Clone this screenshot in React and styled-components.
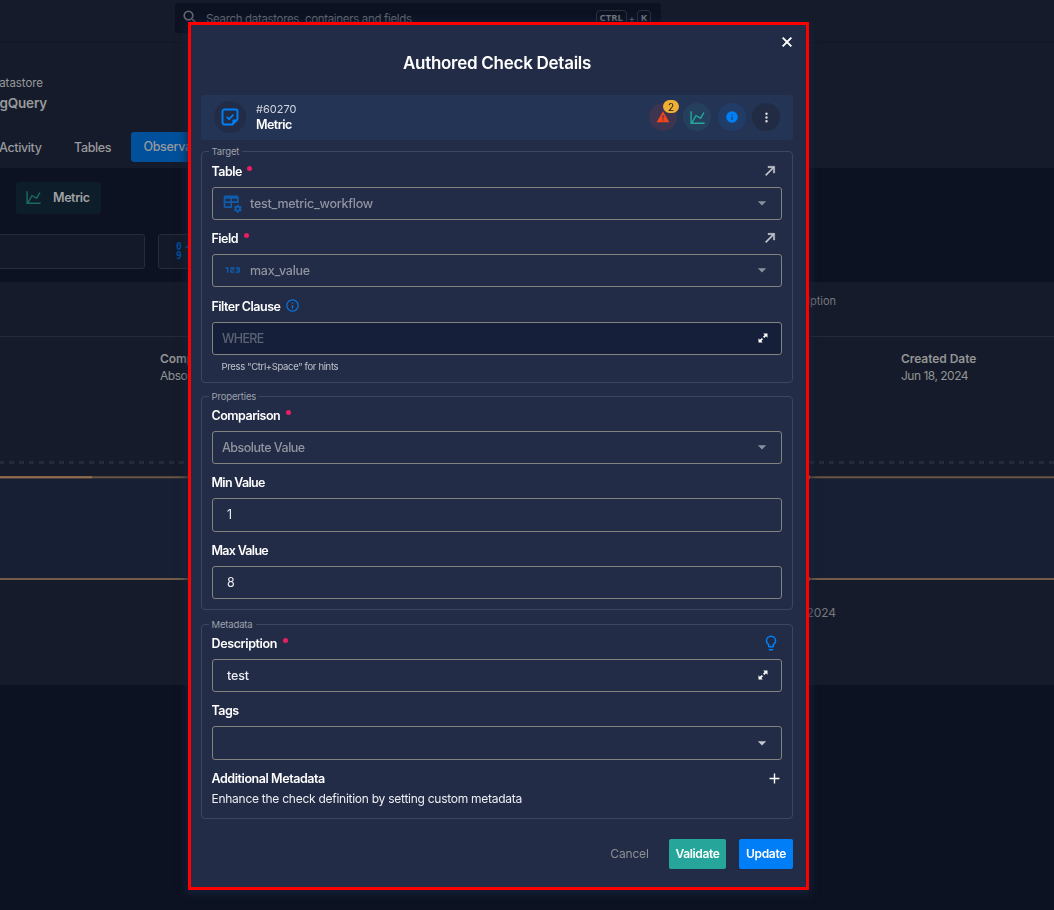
import React from "react";
import styled, { createGlobalStyle } from "styled-components";
import { Md123 } from "react-icons/md";

const GlobalStyle = createGlobalStyle`
  *, *::before, *::after { box-sizing: border-box; }
  html, body { margin: 0; padding: 0; background: #0c1221; overflow: hidden; }
  body { font-family: Inter, "Liberation Sans", sans-serif; color: #fff; }
  button { font: inherit; border: 0; padding: 0; background: none; color: inherit; }
`;

const paths = {
  magnify:
    "M9.5,3A6.5,6.5 0 0,1 16,9.5C16,11.11 15.41,12.59 14.44,13.73L14.71,14H15.5L20.5,19L19,20.5L14,15.5V14.71L13.73,14.44C12.59,15.41 11.11,16 9.5,16A6.5,6.5 0 0,1 3,9.5A6.5,6.5 0 0,1 9.5,3M9.5,5C7,5 5,7 5,9.5C5,12 7,14 9.5,14C12,14 14,12 14,9.5C14,7 12,5 9.5,5Z",
  chart:
    "M16,11.78L20.24,4.45L21.97,5.45L16.74,14.5L10.23,10.75L5.46,19H22V21H2V3H4V17.54L9.5,8L16,11.78Z",
  alert: "M13 14H11V9H13M13 18H11V16H13M1 21H23L12 2L1 21Z",
  info: "M13,9H11V7H13M13,17H11V11H13M12,2A10,10 0 0,0 2,12A10,10 0 0,0 12,22A10,10 0 0,0 22,12A10,10 0 0,0 12,2Z",
  infoOutline:
    "M11,9H13V7H11M12,20C7.59,20 4,16.41 4,12C4,7.59 7.59,4 12,4C16.41,4 20,7.59 20,12C20,16.41 16.41,20 12,20M12,2A10,10 0 0,0 2,12A10,10 0 0,0 12,22A10,10 0 0,0 22,12A10,10 0 0,0 12,2M11,17H13V11H11V17Z",
  dots: "M12,16A2,2 0 0,1 14,18A2,2 0 0,1 12,20A2,2 0 0,1 10,18A2,2 0 0,1 12,16M12,10A2,2 0 0,1 14,12A2,2 0 0,1 12,14A2,2 0 0,1 10,12A2,2 0 0,1 12,10M12,4A2,2 0 0,1 14,6A2,2 0 0,1 12,8A2,2 0 0,1 10,6A2,2 0 0,1 12,4Z",
  close:
    "M19,6.41L17.59,5L12,10.59L6.41,5L5,6.41L10.59,12L5,17.59L6.41,19L12,13.41L17.59,19L19,17.59L13.41,12L19,6.41Z",
  arrow: "M5,17.59L15.59,7H9V5H19V15H17V8.41L6.41,19L5,17.59Z",
  down: "M7,10L12,15L17,10H7Z",
  plus: "M19,13H13V19H11V13H5V11H11V5H13V11H19V13Z",
  bulb: "M12,2A7,7 0 0,1 19,9C19,11.38 17.81,13.47 16,14.74V17A1,1 0 0,1 15,18H9A1,1 0 0,1 8,17V14.74C6.19,13.47 5,11.38 5,9A7,7 0 0,1 12,2M9,21V20H15V21A1,1 0 0,1 14,22H10A1,1 0 0,1 9,21M12,4A5,5 0 0,0 7,9C7,11.05 8.23,12.81 10,13.58V16H14V13.58C15.77,12.81 17,11.05 17,9A5,5 0 0,0 12,4Z",
  expand:
    "M12.5,3H21V11.5L18,8.6L14.6,12L12,9.4L15.4,6ZM3,12.5L6,15.4L9.4,12L12,14.6L8.6,18L11.5,21H3Z",
  tableCog:
    "M4,3H18A2,2 0 0,1 20,5V12.1C19.3,12 18.7,12 18,12.1V12H12V16H12.6C12.3,16.6 12.1,17.3 12,18H4A2,2 0 0,1 2,16V5A2,2 0 0,1 4,3M4,7V10H10V7H4M12,7V10H18V7H12M4,12V16H10V12H4M18,14H20L20.3,15.4L21.4,16L22.7,15.5L23.7,17.2L22.7,18.2V19.4L23.7,20.4L22.7,22.1L21.4,21.7L20.3,22.3L20,23.7H18L17.7,22.3L16.6,21.7L15.3,22.1L14.3,20.4L15.3,19.4V18.2L14.3,17.2L15.3,15.5L16.6,16L17.7,15.4L18,14M19,17.3A1.5,1.5 0 1,0 19,20.3A1.5,1.5 0 1,0 19,17.3Z",
};

const Glyph = styled.svg`
  display: block;
  flex: none;
  width: ${(p) => p.$size}px;
  height: ${(p) => p.$size}px;
  fill: ${(p) => p.$color};
`;

const Icon = ({ name, size, color, stroke }) => (
  <Glyph viewBox="0 0 24 24" $size={size} $color={color}>
    <path d={paths[name]} fillRule="evenodd" stroke={stroke ? color : "none"} strokeWidth={stroke} />
  </Glyph>
);

const NoteCheck = () => (
  <Glyph viewBox="0 0 18 18" $size={18} $color="none">
    <path
      d="M11.4 16.5H3.4A1.9 1.9 0 0 1 1.5 14.6V3.4A1.9 1.9 0 0 1 3.4 1.5H14.6A1.9 1.9 0 0 1 16.5 3.4V11.4L11.4 16.5Z"
      stroke="#0080f6"
      strokeWidth="1.9"
      strokeLinejoin="round"
    />
    <path d="M11.4 17V12.6Q11.4 11.4 12.6 11.4H17Z" fill="#0080f6" />
    <path d="M5.7 8.9L8.1 11.2L12.4 6.7" stroke="#0080f6" strokeWidth="1.7" />
  </Glyph>
);

/* ---------- page behind the dialog ---------- */

const Page = styled.div`
  width: 1054px;
  height: 910px;
  overflow: hidden;
  display: flex;
  flex-direction: column;
  background: #0c1221;
  white-space: nowrap;
`;

const TopBar = styled.header`
  height: 43px;
  flex: none;
  padding: 3px 0 0 175px;
  background: #151b2a;
  border-bottom: 1px solid #121724;
`;

const SearchBox = styled.div`
  width: 486px;
  height: 30px;
  border-radius: 4px;
  background: #0c1221;
  display: flex;
  align-items: center;
  padding: 0 10px 1px 6px;
  color: #676a73;
  font-size: 11.5px;
  letter-spacing: -0.33px;
`;

const SearchText = styled.span`
  flex: 1;
  padding: 3px 0 0 6px;
`;

const Key = styled.kbd`
  font: 700 9.5px "Noto Sans", sans-serif;
  letter-spacing: 0;
  height: 16px;
  line-height: 14px;
  padding: 0 3px;
  border: 1px solid #2c313e;
  border-radius: 4px;
  color: #777a82;
`;

const Plus = styled.span`
  width: 10px;
  text-align: center;
  font-size: 10px;
`;

const StoreHeader = styled.section`
  height: 125px;
  flex: none;
  background: #151b2a;
  display: flex;
  flex-direction: column;
  color: #999a9c;
`;

const StoreLine = styled.div`
  width: ${(p) => p.$w}px;
  height: 20px;
  line-height: 20px;
  display: flex;
  justify-content: flex-end;
  overflow: hidden;
  font-size: ${(p) => p.$size}px;
  font-weight: ${(p) => p.$weight};
  letter-spacing: ${(p) => p.$ls}px;
  &:first-child { margin-top: 30px; }
`;

const Tabs = styled.nav`
  margin-top: 19px;
  height: 30px;
  display: flex;
  align-items: center;
  font-size: 12.5px;
  font-weight: 500;
  letter-spacing: -0.35px;
`;

const Tab = styled.span`
  width: ${(p) => p.$w}px;
  margin-left: ${(p) => p.$ml || 0}px;
`;

const ActiveTab = styled.span`
  height: 30px;
  line-height: 30px;
  width: 110px;
  padding-left: 12.5px;
  border-radius: 3px;
  background: #00509b;
  letter-spacing: -0.35px;
`;

const Filters = styled.section`
  height: 114px;
  flex: none;
  padding-top: 14px;
`;

const Chip = styled.div`
  margin-left: 16px;
  width: 85px;
  height: 32px;
  border-radius: 3px;
  background: #0d1d29;
  display: flex;
  align-items: center;
  gap: 11px;
  padding: 0 0 1px 9px;
  color: #a0a2a4;
  font-size: 12.5px;
  font-weight: 600;
  letter-spacing: -0.4px;
`;

const FilterRow = styled.div`
  margin-top: 20px;
  display: flex;
  gap: 13px;
`;

const FilterBox = styled.div`
  width: ${(p) => p.$w}px;
  height: 35px;
  margin-left: ${(p) => p.$ml || 0}px;
  border: 1px solid #262c3a;
  border-radius: 3px;
  background: #131928;
  padding: 8px 0 0 17px;
`;

const SortIcon = styled.div`
  display: flex;
  gap: 2px;
  color: #00509b;
  font: 700 10px/8.5px "DejaVu Sans Mono", monospace;
`;

const Digits = styled.span`
  display: flex;
  flex-direction: column;
`;

const Card = styled.section`
  height: 403px;
  flex: none;
  background: #151b2a;
  display: flex;
  flex-direction: column;
`;

const CardHead = styled.div`
  height: 54px;
  width: 836px;
  padding-top: 11px;
  text-align: right;
  font-size: 11px;
  line-height: 16px;
  color: #76787e;
`;

const CardInfo = styled.div`
  border-top: 1px solid #252b38;
  padding: 13px 0 0 160px;
  height: 71px;
  display: flex;
  color: #939494;
`;

const InfoItem = styled.div`
  width: 741px;
  flex: none;
  display: flex;
  flex-direction: column;
  font-size: 12px;
  line-height: 17px;
  letter-spacing: -0.5px;
  b { font-weight: 600; letter-spacing: -0.06px; }
`;

const Chart = styled.svg`
  display: block;
  width: 1054px;
  height: 190px;
`;

const AxisLabel = styled.div`
  width: 836px;
  text-align: right;
  font-size: 12px;
  line-height: 18px;
  letter-spacing: -0.1px;
  margin-top: 7px;
  color: #76787e;
`;

/* ---------- dialog ---------- */

const Overlay = styled.div`
  position: fixed;
  inset: 0;
  display: flex;
  align-items: flex-start;
  padding: 22px 0 0 188px;
`;

const Dialog = styled.div`
  position: relative;
  width: 621px;
  height: 868px;
  border: 3px solid #ff0000;
  background: #232c46;
  box-shadow: 0 2px 8px 2px rgba(22, 36, 62, 0.8);
  padding: 26px 13px 0 10px;
  display: flex;
  flex-direction: column;
  white-space: nowrap;
`;

const CloseButton = styled.button`
  position: absolute;
  top: 9px;
  right: 11px;
`;

const Title = styled.h1`
  margin: 0;
  height: 24px;
  line-height: 24px;
  text-align: center;
  font-size: 17px;
  font-weight: 600;
  letter-spacing: -0.27px;
`;

const CheckBar = styled.div`
  margin-top: 20px;
  height: 45px;
  flex: none;
  border-radius: 3px;
  background: #243455;
  display: flex;
  align-items: center;
  padding: 0 13px 1px;
`;

const Round = styled.div`
  position: relative;
  width: ${(p) => p.$size}px;
  height: ${(p) => p.$size}px;
  border-radius: 50%;
  background: ${(p) => p.$bg};
  display: flex;
  align-items: center;
  justify-content: center;
`;

const CheckId = styled.div`
  flex: 1;
  margin-left: 10px;
  font-size: 11px;
  line-height: 15.5px;
  color: #d3d6dd;
  b { display: block; font-size: 12.5px; font-weight: 600; color: #fff; letter-spacing: -0.55px; }
`;

const Actions = styled.div`
  display: flex;
  align-items: center;
  gap: 6.3px;
`;

const Badge = styled.span`
  position: absolute;
  left: 14px;
  top: -3px;
  width: 16px;
  height: 13px;
  border-radius: 7px;
  background: #efb034;
  color: #17191f;
  font-size: 10px;
  line-height: 14px;
  text-align: center;
`;

const Group = styled.section`
  position: relative;
  height: ${(p) => p.$h}px;
  flex: none;
  margin-top: ${(p) => p.$mt}px;
  border: 1px solid #3e465d;
  border-radius: 4px;
  padding: 0 10px;
`;

const Legend = styled.span`
  position: absolute;
  top: -8px;
  left: 7px;
  height: 15px;
  line-height: 15px;
  padding: 0 3px 0 2.5px;
  background: #232c46;
  color: #9da1ad;
  font-size: 9.5px;
  letter-spacing: -0.15px;
`;

const LabelRow = styled.div`
  height: 28px;
  margin: ${(p) => p.$gap}px 0 2px;
  display: flex;
  align-items: center;
  font-size: 12.5px;
  font-weight: 600;
  letter-spacing: ${(p) => p.$ls}px;
`;

const LabelText = styled.span`
  margin-left: -0.5px;
`;

const Required = styled.i`
  width: 5px;
  height: 5px;
  border-radius: 50%;
  margin: 0 0 5px 5.5px;
  background: #e91e63;
`;

const InfoMark = styled.span`
  margin-left: 5px;
  margin-bottom: 1px;
`;

const Tail = styled.span`
  margin-left: auto;
  margin-right: ${(p) => p.$mr ?? 4.5}px;
`;

const Control = styled.div`
  height: ${(p) => p.$h || 33}px;
  border: 1px solid #82827f;
  border-radius: 3px;
  background: ${(p) => p.$bg || "transparent"};
  color: ${(p) => p.$color || "#9195a1"};
  display: flex;
  align-items: center;
  padding: 0 10px 1px ${(p) => p.$pl ?? 9}px;
  font-size: 12.5px;
  font-weight: ${(p) => p.$weight || 400};
  letter-spacing: ${(p) => p.$ls ?? -0.15}px;
`;

const Lead = styled.span`
  width: 28px;
  display: flex;
  svg { flex: none; }
`;

const Hint = styled.div`
  padding: 5px 0 0 9.5px;
  font-size: 9.5px;
  line-height: 14px;
  letter-spacing: -0.35px;
  color: #bfc3cc;
`;

const Note = styled.div`
  margin: -3px 0 0 -0.5px;
  font-size: 12px;
  line-height: 16px;
  letter-spacing: -0.26px;
  color: #eceef2;
`;

const Footer = styled.footer`
  margin-top: 20px;
  display: flex;
  justify-content: flex-end;
  gap: 13px;
`;

const Button = styled.button`
  width: ${(p) => p.$w}px;
  height: 30px;
  padding-bottom: 1px;
  border-radius: 2px;
  background: ${(p) => p.$bg || "transparent"};
  color: ${(p) => p.$color || "#fff"};
  font-size: 12px;
  font-weight: ${(p) => (p.$bg ? 600 : 400)};
  letter-spacing: ${(p) => p.$ls}px;
`;

const Field = ({ label, gap = 4, required, info, tail, tailMr, ls = -0.5, children }) => (
  <>
    <LabelRow $gap={gap} $ls={ls}>
      <LabelText>{label}</LabelText>
      {required && <Required />}
      {info && (
        <InfoMark>
          <Icon name="infoOutline" size={15} color="#0a75e0" />
        </InfoMark>
      )}
      {tail && <Tail $mr={tailMr}>{tail}</Tail>}
    </LabelRow>
    {children}
  </>
);

const Caret = ({ color = "#8b909e" }) => (
  <Tail $mr={-1}>
    <Icon name="down" size={20} color={color} />
  </Tail>
);

const Expand = () => (
  <Tail $mr={2}>
    <Icon name="expand" size={12} color="#fff" />
  </Tail>
);

const OpenLink = () => <Icon name="arrow" size={16} color="#c3c6ce" stroke={0.7} />;

export default function App() {
  return (
    <>
      <GlobalStyle />
      <Page>
        <TopBar>
          <SearchBox>
            <Icon name="magnify" size={19} color="#676a73" />
            <SearchText>Search datastores, containers and fields</SearchText>
            <Key>CTRL</Key>
            <Plus>+</Plus>
            <Key>K</Key>
          </SearchBox>
        </TopBar>
        <StoreHeader>
          <StoreLine $w={43} $size={11.5} $weight={400} $ls={-0.05}>Datastore</StoreLine>
          <StoreLine $w={47} $size={13.5} $weight={600} $ls={-0.2}>BigQuery</StoreLine>
          <Tabs>
            <Tab $w={75} $ml={-1}>Activity</Tab>
            <Tab $w={57}>Tables</Tab>
            <ActiveTab>Observability</ActiveTab>
          </Tabs>
        </StoreHeader>
        <Filters>
          <Chip>
            <Icon name="chart" size={17} color="#1c695f" />
            Metric
          </Chip>
          <FilterRow>
            <FilterBox $w={155} $ml={-10} />
            <FilterBox $w={120}>
              <SortIcon>
                <Digits><span>0</span><span>9</span></Digits>
                <svg width="12" height="16" viewBox="0 0 12 16" fill="#00509b">
                  <path d="M5 0L9 5H6V16H4V5H1Z" />
                </svg>
              </SortIcon>
            </FilterBox>
          </FilterRow>
        </Filters>
        <Card>
          <CardHead>Description</CardHead>
          <CardInfo>
            <InfoItem><b>Comparison</b><span>Absolute Value</span></InfoItem>
            <InfoItem><b>Created Date</b><span>Jun 18, 2024</span></InfoItem>
          </CardInfo>
          <Chart viewBox="0 406 1054 190">
            <line x1="-1" x2="1054" y1="461.5" y2="461.5" stroke="#252a3a" strokeWidth="3" strokeDasharray="5 5" />
            <rect x="0" y="477" width="1054" height="101" fill="#171f34" />
            <line x1="0" x2="1054" y1="476.2" y2="476.2" stroke="#695540" strokeWidth="2" />
            <line x1="0" x2="92" y1="476.2" y2="476.2" stroke="#926d4d" strokeWidth="2" />
            <line x1="0" x2="1054" y1="578" y2="578" stroke="#735d49" strokeWidth="2" />
            <circle cx="808" cy="476.2" r="2.3" fill="#d07a5c" />
            <circle cx="808" cy="578" r="2.3" fill="#d07a5c" />
          </Chart>
          <AxisLabel>Jun 18, 2024</AxisLabel>
        </Card>
      </Page>

      <Overlay>
        <Dialog>
          <CloseButton aria-label="Close">
            <Icon name="close" size={16} color="#fff" stroke={1} />
          </CloseButton>
          <Title>Authored Check Details</Title>
          <CheckBar>
            <Round $size={32} $bg="#232c46"><NoteCheck /></Round>
            <CheckId>#60270<b>Metric</b></CheckId>
            <Actions>
              <Round $size={28} $bg="#3d3450">
                <Icon name="alert" size={14} color="#f0441c" />
                <Badge>2</Badge>
              </Round>
              <Round $size={28} $bg="#25405d"><Icon name="chart" size={17} color="#26a69a" /></Round>
              <Round $size={28} $bg="#223c68"><Icon name="info" size={14} color="#0080f8" /></Round>
              <Round $size={28} $bg="#222b44"><Icon name="dots" size={15} color="#d8dbe2" /></Round>
            </Actions>
          </CheckBar>

          <Group $h={232} $mt={11}>
            <Legend>Target</Legend>
            <Field label="Table" gap={5} required tail={<OpenLink />}>
              <Control $weight={500} $ls={-0.25}>
                <Lead><Icon name="tableCog" size={20} color="#105dae" /></Lead>
                test_metric_workflow
                <Caret />
              </Control>
            </Field>
            <Field label="Field" required tail={<OpenLink />}>
              <Control $weight={500} $ls={-0.25}>
                <Lead><Md123 size={22} color="#105dae" /></Lead>
                max_value
                <Caret />
              </Control>
            </Field>
            <Field label="Filter Clause" gap={5} info>
              <Control $bg="#161f3a" $color="#5b6274" $weight={500} $ls={-0.7}>
                WHERE
                <Expand />
              </Control>
            </Field>
            <Hint>Press "Ctrl+Space" for hints</Hint>
          </Group>

          <Group $h={214} $mt={13}>
            <Legend>Properties</Legend>
            <Field label="Comparison" required>
              <Control $ls={-0.5} $weight={500}>Absolute Value<Caret /></Control>
            </Field>
            <Field label="Min Value" ls={-0.7}>
              <Control $h={34} $pl={14} $color="#eceef2">1</Control>
            </Field>
            <Field label="Max Value" ls={-0.7}>
              <Control $pl={14} $color="#eceef2">8</Control>
            </Field>
          </Group>

          <Group $h={195} $mt={14}>
            <Legend>Metadata</Legend>
            <Field label="Description" required ls={-0.38} tail={<Icon name="bulb" size={18} color="#0080f6" />} tailMr={2.5}>
              <Control $pl={14} $color="#eceef2" $weight={500}>test<Expand /></Control>
            </Field>
            <Field label="Tags">
              <Control $h={34}><Caret color="#c3c6ce" /></Control>
            </Field>
            <Field label="Additional Metadata" ls={-0.43} tail={<Icon name="plus" size={17} color="#fff" />} tailMr={-1} />
            <Note>Enhance the check definition by setting custom metadata</Note>
          </Group>

          <Footer>
            <Button $w={53} $color="#8f9195" $ls={-0.15}>Cancel</Button>
            <Button $w={57} $bg="#26a69a" $ls={-0.35}>Validate</Button>
            <Button $w={54} $bg="#007ef7" $ls={-0.3}>Update</Button>
          </Footer>
        </Dialog>
      </Overlay>
    </>
  );
}
